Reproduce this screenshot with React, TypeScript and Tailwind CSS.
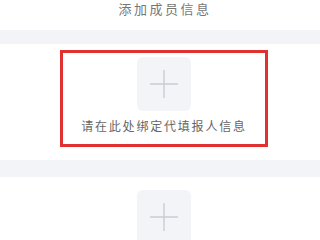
import React from 'react';

const PlusTile: React.FC = () => (
  <div className="w-[54px] h-[54px] rounded-[6px] bg-[#f2f4f7] flex items-center justify-center">
    <svg width="30" height="30" viewBox="0 0 30 30">
      <path d="M15 1v28M1 15h28" stroke="#c9cdd3" strokeWidth="1.4" />
    </svg>
  </div>
);

export default function App() {
  return (
    <div className="w-[320px] h-[240px] overflow-hidden bg-white font-['Noto_Sans_CJK_SC',sans-serif]">
      <div className="h-[30px] flex items-start justify-center pl-[10px] pt-[1px]">
        <span className="text-[13px] leading-[16px] tracking-[2.5px] text-[#777]">添加成员信息</span>
      </div>
      <div className="h-[14px] bg-[#f2f4f7]" />
      <div className="h-[116px] pt-[6px]">
        <div className="ml-[60px] w-[208px] h-[97px] border-[3px] border-[#e03030] flex flex-col items-center pt-[4px]">
          <PlusTile />
          <span className="mt-[7px] text-[12px] leading-[16px] tracking-[1.8px] text-[#666]">请在此处绑定代填报人信息</span>
        </div>
      </div>
      <div className="h-[17px] bg-[#f2f4f7]" />
      <div className="pt-[13px] pl-[137px]">
        <PlusTile />
      </div>
    </div>
  );
}
